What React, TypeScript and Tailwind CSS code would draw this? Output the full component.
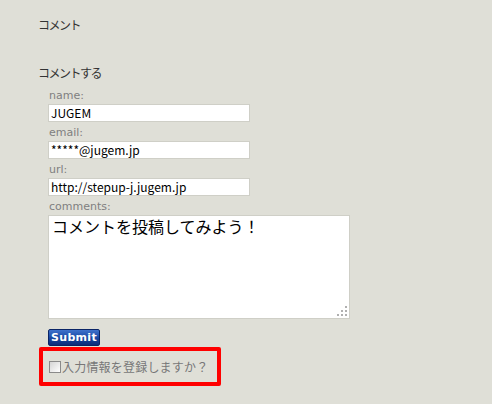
export default function App() {
  const font = { fontFamily: '"Noto Sans CJK JP", "DejaVu Sans", sans-serif' }
  const inputCls =
    'mt-px w-[202px] h-[18px] px-[2px] bg-white border border-[#cfcfc7] text-[12px] text-black outline-none'
  const labelCls = "text-[11px] leading-[14px] text-[#808080] pl-px font-['DejaVu_Sans',sans-serif]"
  return (
    <div className="w-[492px] h-[404px] bg-[#dfdfd7] text-[#333] overflow-hidden" style={font}>
      <div className="pl-[38px] pt-[16px] tracking-[-1.5px]">
        <h2 className="text-[12px] leading-[18px]">コメント</h2>
        <h3 className="mt-[30px] text-[12px] leading-[18px]">コメントする</h3>
      </div>
      <form className="pl-[48px] mt-[7px] flex flex-col items-start" onSubmit={e => e.preventDefault()}>
        <label className={labelCls}>name:</label>
        <input defaultValue="JUGEM" className={inputCls} />
        <label className={'mt-[4px] ' + labelCls}>email:</label>
        <input defaultValue="*****@jugem.jp" className={inputCls} />
        <label className={'mt-[4px] ' + labelCls}>url:</label>
        <input defaultValue="http://stepup-j.jugem.jp" className={inputCls} />
        <label className={'mt-[4px] ' + labelCls}>comments:</label>
        <div className="relative mt-px">
          <textarea
            defaultValue="コメントを投稿してみよう！"
            className="block w-[302px] h-[104px] px-[3px] py-0 bg-white border border-[#cfcfc7] text-[16px] leading-[20px] text-black outline-none resize-none"
          />
          <svg className="absolute right-[3px] bottom-[3px]" width="10" height="10" viewBox="0 0 10 10" fill="#b0b0b0">
            <rect x="8" y="0" width="2" height="2" />
            <rect x="4" y="4" width="2" height="2" />
            <rect x="8" y="4" width="2" height="2" />
            <rect x="0" y="8" width="2" height="2" />
            <rect x="4" y="8" width="2" height="2" />
            <rect x="8" y="8" width="2" height="2" />
          </svg>
        </div>
        <button
          type="submit"
          className="mt-[10px] w-[52px] h-[17px] rounded-[2px] border border-[#0a2466] bg-gradient-to-b from-[#3f72cc] via-[#1b4aa6] to-[#0c2c78] text-white text-[11px] font-bold leading-[15px] tracking-[0.3px] font-['DejaVu_Sans',sans-serif]"
        >
          Submit
        </button>
      </form>
      <div className="ml-[39px] mt-px w-[182px] h-[39px] border-[4px] border-[#ff0000] rounded-[2px] flex items-center pl-[6px]">
        <label className="flex items-center text-[12px] leading-[14px] text-[#777] whitespace-nowrap">
          <span className="w-[12px] h-[12px] border border-[#8a8a8a] bg-gradient-to-br from-[#d4d4d4] to-[#ffffff]" />
          <span className="ml-px tracking-[0.2px]">入力情報を登録しますか？</span>
        </label>
      </div>
    </div>
  )
}
